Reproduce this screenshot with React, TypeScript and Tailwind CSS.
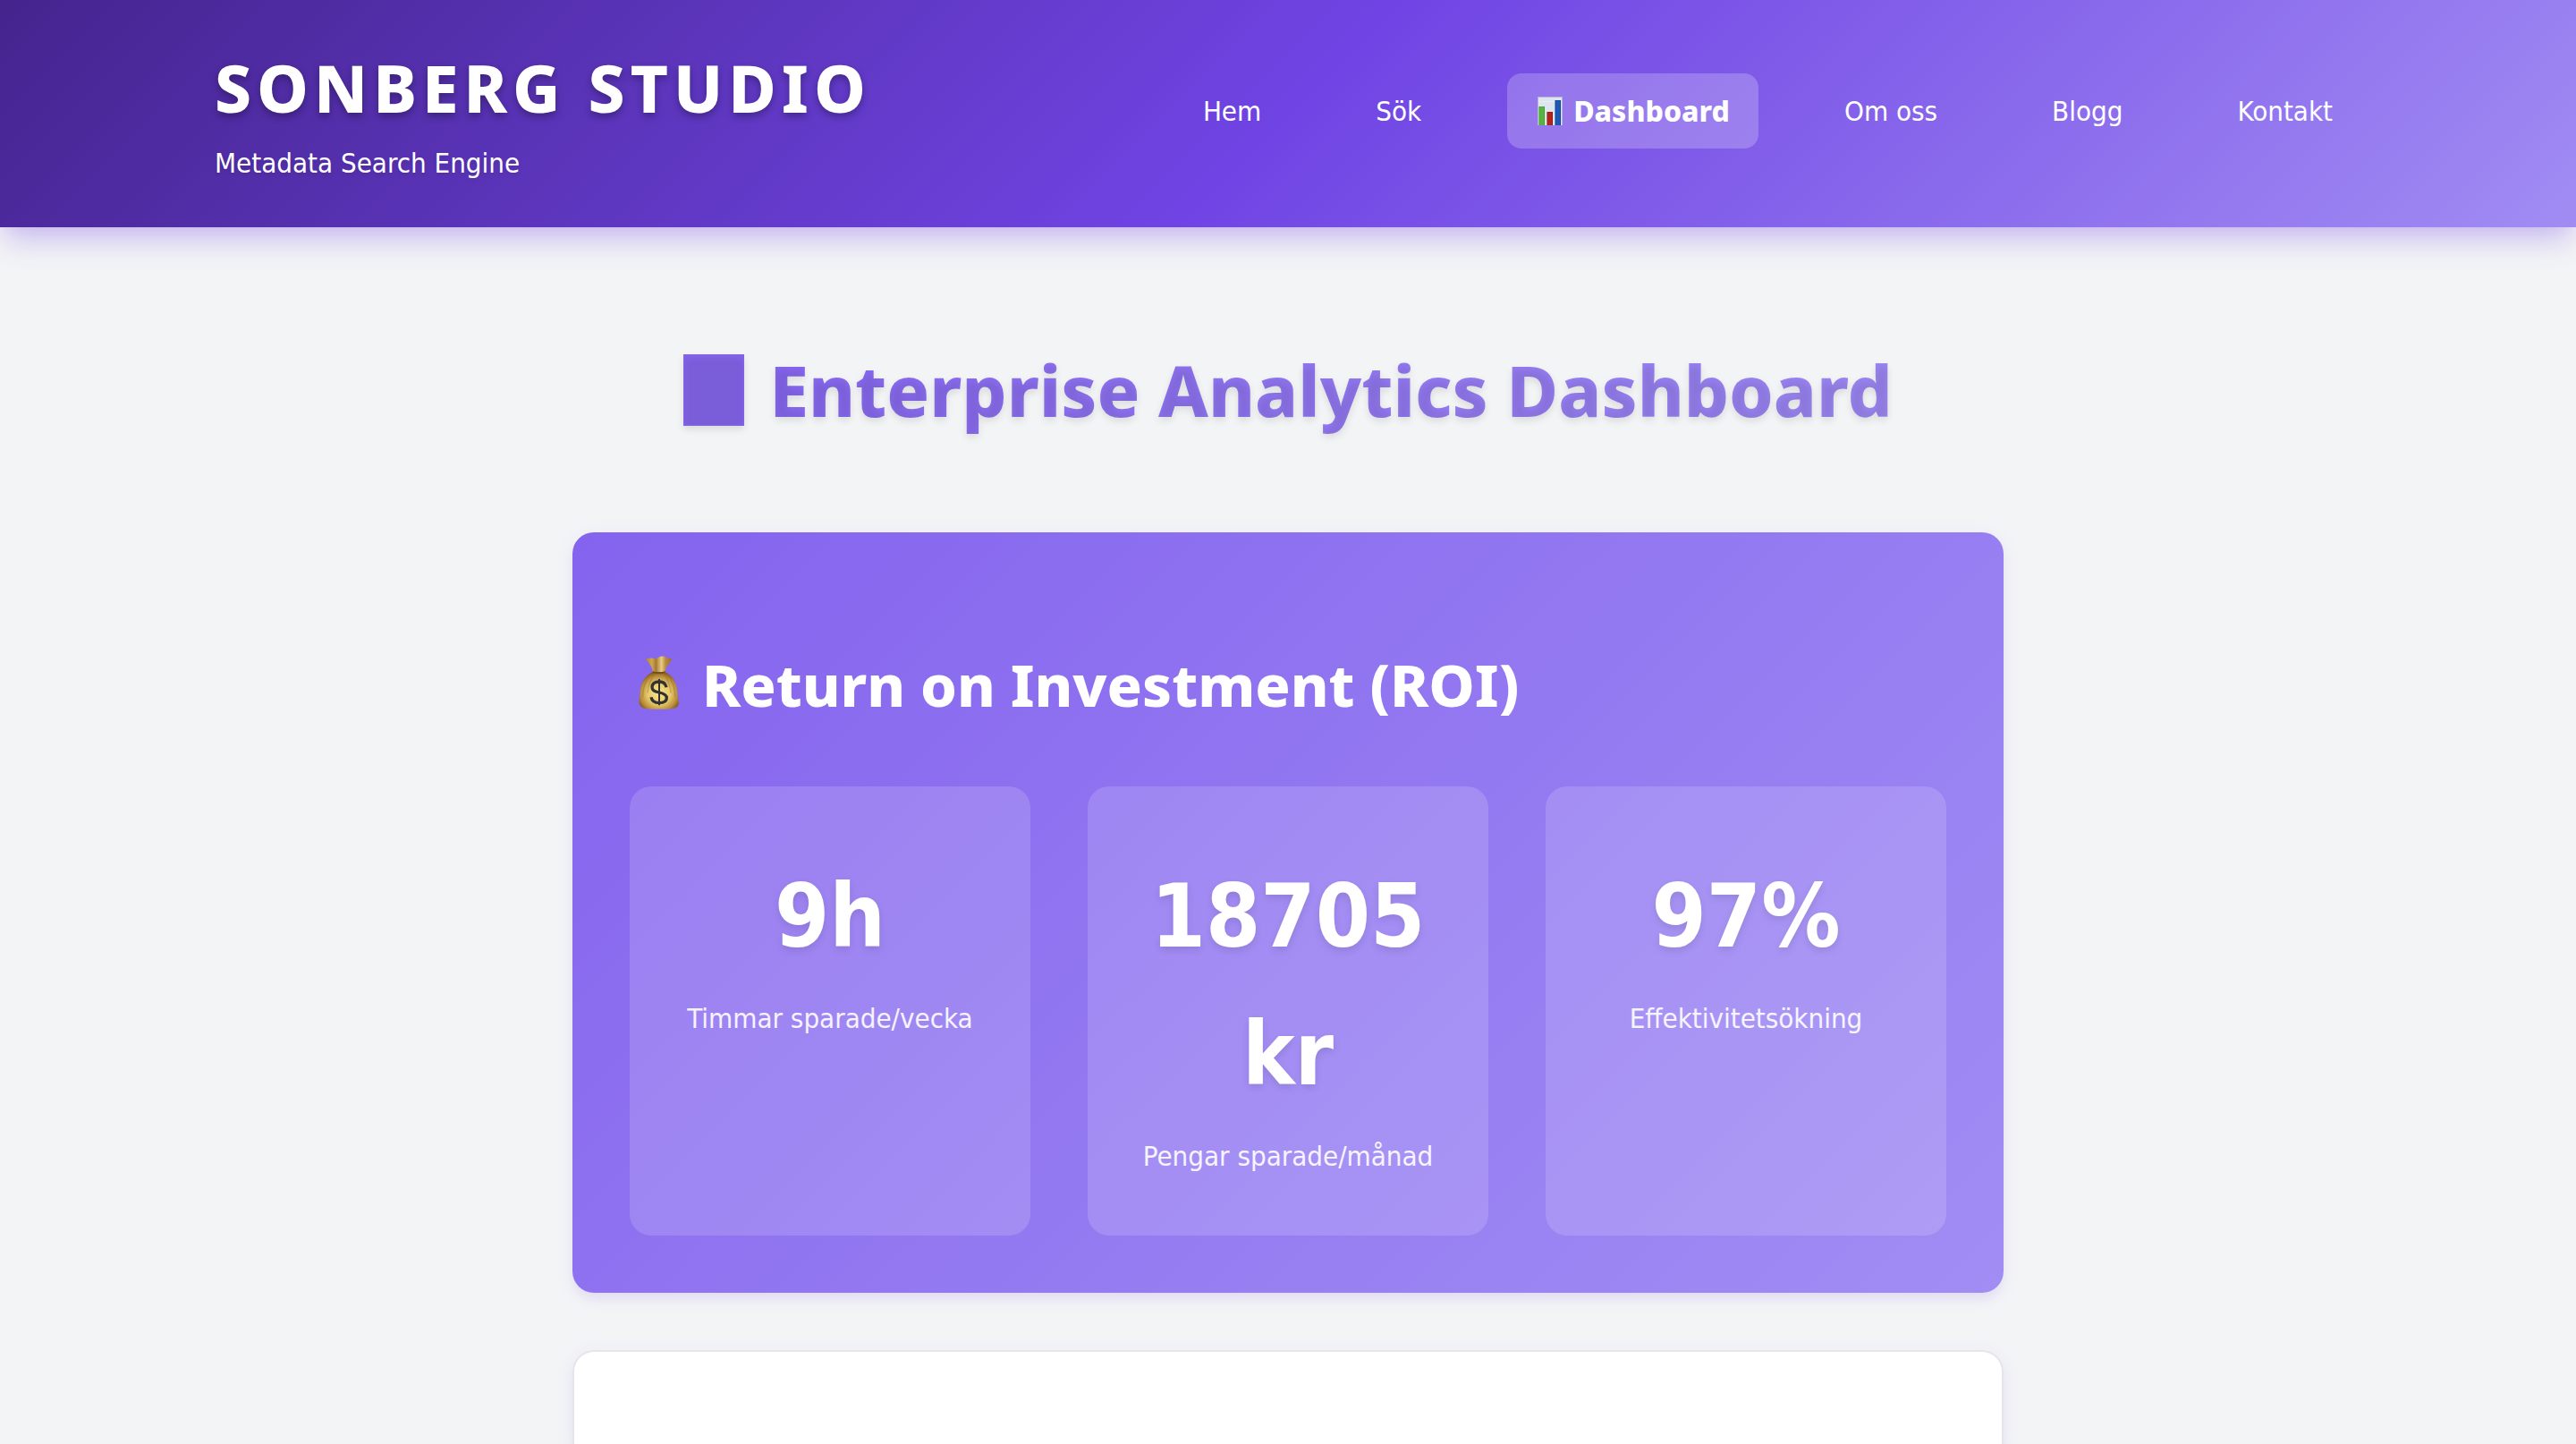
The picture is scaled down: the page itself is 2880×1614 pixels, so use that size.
import type { ReactNode } from "react";

function ChartIcon() {
  return (
    <svg viewBox="0 0 32 32" className="size-8 shrink-0" aria-hidden="true">
      <rect x="2" y="0" width="28" height="32" fill="#b9b4dc" />
      <rect x="3" y="1" width="26" height="31" fill="#dde5ef" />
      <rect x="3" y="5" width="26" height="1" fill="#e8eef4" />
      <rect x="3.5" y="11" width="6.5" height="21" fill="#45a02c" />
      <rect x="4.5" y="11.5" width="4.5" height="20.5" fill="#56b53c" />
      <rect x="12.5" y="17" width="6.5" height="15" fill="#8d1a12" />
      <rect x="13.5" y="17.5" width="4.5" height="14.5" fill="#b3241a" />
      <rect x="21.5" y="4" width="6.5" height="28" fill="#15438f" />
      <rect x="22.5" y="4.5" width="4.5" height="27.5" fill="#1c5bb5" />
    </svg>
  );
}

function MoneyBagIcon() {
  return (
    <svg viewBox="100 100 141 198" className="h-[66px] w-[47px] shrink-0" aria-hidden="true">
      <defs>
        <radialGradient id="bagBody" cx="0.5" cy="0.58" r="0.58">
          <stop offset="0" stopColor="#f8e48c" />
          <stop offset="0.5" stopColor="#e6c96b" />
          <stop offset="0.8" stopColor="#b98f3c" />
          <stop offset="1" stopColor="#80561c" />
        </radialGradient>
        <linearGradient id="bagTop" x1="0" x2="1" y1="0" y2="0">
          <stop offset="0" stopColor="#a8812f" />
          <stop offset="0.25" stopColor="#cfa650" />
          <stop offset="0.4" stopColor="#a67a33" />
          <stop offset="0.6" stopColor="#e6cd86" />
          <stop offset="0.75" stopColor="#b98a3c" />
          <stop offset="1" stopColor="#94702a" />
        </linearGradient>
      </defs>
      <path
        d="M148 157C122 168 105 194 104 232C104 244 99 258 103 266C108 278 122 282 145 282H194C216 282 230 278 234 266C237 258 231 246 231 232C230 194 214 168 188 157Z"
        fill="url(#bagBody)"
      />
      <path d="M142 166C126 182 114 208 114 240M152 162C142 182 132 200 130 226M186 162C196 182 206 204 208 226M194 166C212 184 222 210 222 240" fill="none" stroke="#9a7330" strokeOpacity="0.45" strokeWidth="4" strokeLinecap="round" />
      <path d="M122 112C130 115 138 108 146 111C154 113 162 112 167 108C176 103 190 104 194 110C200 113 206 111 213 112C204 126 192 140 188 158H148C146 140 134 126 122 112Z" fill="url(#bagTop)" />
      <path d="M147 155C160 159 176 159 189 155V160C176 164 160 164 147 160Z" fill="#744c1b" />
      <path d="M169 181V269" stroke="#34322f" strokeWidth="6" />
      <path d="M193 209C191 197 183 190 169 190C154 190 145 197 145 208C145 219 152 222 169 226C187 230 194 235 194 244C194 255 185 261 169 261C153 261 144 254 142 242" fill="none" stroke="#34322f" strokeWidth="10" />
    </svg>
  );
}

const navItems: { label: string; icon?: ReactNode }[] = [
  { label: "Hem" },
  { label: "Sök" },
  { label: "Dashboard", icon: <ChartIcon /> },
  { label: "Om oss" },
  { label: "Blogg" },
  { label: "Kontakt" },
];

const stats = [
  { value: "9h", label: "Timmar sparade/vecka" },
  { value: "18705 kr", label: "Pengar sparade/månad" },
  { value: "97%", label: "Effektivitetsökning" },
];

export default function App() {
  return (
    <div className="flex min-h-screen flex-col bg-[#f3f4f6] font-['DejaVu_Sans_Condensed','DejaVu_Sans',sans-serif] text-[31px] leading-[52px]">
      <header className="bg-[linear-gradient(135deg,#45248e_0%,#7044e4_50%,#a18cf3_100%)] px-12 pt-10 pb-[46px] text-white shadow-[0_20px_30px_-6px_rgba(112,68,228,0.3),0_8px_12px_-4px_rgba(112,68,228,0.05)]">
        <div className="mx-auto flex max-w-[2400px] items-center justify-between">
          <div>
            <p className="font-['Noto_Sans',sans-serif] text-[73px] leading-[116px] font-extrabold tracking-[6px] [text-shadow:0_4px_8px_rgba(0,0,0,0.3)]">
              SONBERG STUDIO
            </p>
            <p className="[text-shadow:0_2px_4px_rgba(0,0,0,0.1)]">Metadata Search Engine</p>
          </div>
          <nav>
            <ul className="flex items-center gap-16">
              {navItems.map(({ label, icon }) => (
                <li key={label}>
                  <a
                    href="#"
                    aria-current={icon ? "page" : undefined}
                    className={
                      icon
                        ? "flex items-center gap-2.5 rounded-2xl bg-white/22 px-8 py-4 font-['Noto_Sans',sans-serif] text-[32px] font-extrabold"
                        : "flex items-center rounded-2xl px-8 py-4"
                    }
                  >
                    {icon}
                    {label}
                  </a>
                </li>
              ))}
            </ul>
          </nav>
        </div>
      </header>

      <main className="mx-auto flex w-full max-w-[1600px] flex-1 flex-col pt-[118px]">
        <h1 className="mb-[95px] flex items-center justify-center gap-7 bg-[linear-gradient(135deg,#8260f0,#a08cf4)] bg-clip-text font-['Noto_Sans',sans-serif] text-[79px] leading-[128px] font-extrabold text-transparent [text-shadow:0_4px_8px_rgba(0,0,0,0.1)]">
          <span
            aria-hidden="true"
            className="h-20 w-[68px] bg-[#7a5dd8] shadow-[0_4px_8px_rgba(0,0,0,0.1),inset_0_4px_8px_#8464ea,inset_0_0_2px_#9a82ee]"
          />
          Enterprise Analytics Dashboard
        </h1>

        <section className="rounded-3xl bg-[linear-gradient(135deg,#8463ee,#a18df4)] p-16 text-white shadow-[0_8px_12px_-2px_rgba(112,68,228,0.1),0_4px_24px_rgba(112,68,228,0.05)]">
          <h2 className="mt-[54px] mb-[62px] flex items-center gap-6 pl-2.5 font-['Noto_Sans',sans-serif] text-[65px] leading-[104px] font-extrabold">
            <MoneyBagIcon />
            Return on Investment (ROI)
          </h2>
          <div className="grid grid-cols-3 gap-16">
            {stats.map(({ value, label }) => (
              <div key={label} className="rounded-3xl bg-white/15 px-8 pt-17 pb-16 text-center">
                <p className="mb-3 text-[98px] leading-[154px] font-bold [text-shadow:0_4px_8px_rgba(0,0,0,0.1)]">
                  {value}
                </p>
                <p className="leading-[50px] text-white/90">{label}</p>
              </div>
            ))}
          </div>
        </section>

        <section
          aria-label="Analytics"
          className="mt-16 min-h-24 flex-1 rounded-t-3xl border-2 border-b-0 border-[#e5e5eb] bg-white shadow-[0_8px_12px_-2px_rgba(112,68,228,0.1),0_4px_24px_rgba(112,68,228,0.05)]"
        />
      </main>
    </div>
  );
}
